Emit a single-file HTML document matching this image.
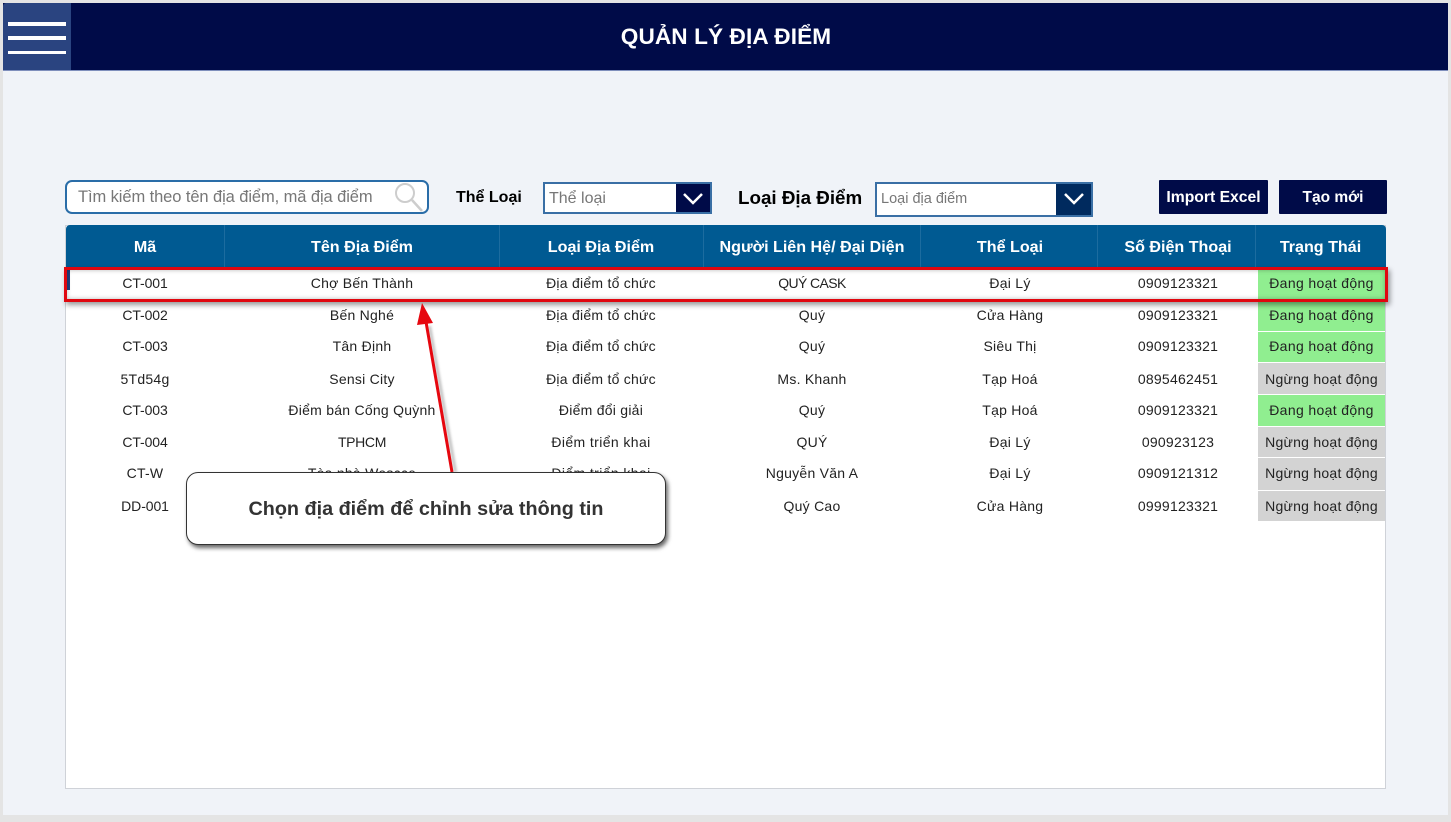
<!DOCTYPE html>
<html lang="vi">
<head>
<meta charset="utf-8">
<title>Quản lý địa điểm</title>
<style>
html,body{margin:0;padding:0;width:1451px;height:822px;overflow:hidden;background:#e4e4e4;font-family:"Liberation Sans","DejaVu Sans",sans-serif;color:#222}
*{box-sizing:border-box}
.a{position:absolute}
#app{left:3px;top:3px;width:1445px;height:812px;background:#f0f3f8}
#hdr{left:3px;top:3px;width:1445px;height:68px;background:#000b48;border-bottom:1px solid #7f8fbc}
#menu{left:3px;top:3px;width:68px;height:67px;background:#2a4480;border-radius:3px 0 0 0}
.bar{left:8px;width:57.5px;height:3.6px;background:#fff}
#title{left:3px;top:21px;width:1445px;text-align:center;color:#fff;font-weight:bold;font-size:22.6px;line-height:32px;padding-left:1px;letter-spacing:.1px}
#search{left:65px;top:180px;width:364px;height:34px;background:#fff;border:2px solid #2a6da8;border-radius:7px}
#stext{left:78px;top:186px;font-size:16.5px;line-height:22px;color:#777;letter-spacing:-.09px;white-space:nowrap}
.lbl{font-weight:bold;color:#000;white-space:nowrap}
.dd{background:#fff;border:2px solid #3a6fa5}
.ddt{color:#777;white-space:nowrap}
.btn{background:#000b48;color:#fff;font-weight:bold;text-align:center;line-height:36px;height:34px;border-radius:1px}
#tbl{left:65px;top:225px;width:1321px;height:564px;background:#fff;border:1px solid #cfd2d8}
#th{left:66px;top:225px;width:1320px;height:42px;background:#005a92;border-radius:4px 4px 0 0}
.sep{top:225px;width:1px;height:42px;background:#1c6c9f}
.h,.c{position:absolute;text-align:center;white-space:nowrap}
.h{top:237px;color:#fff;font-weight:bold;font-size:16.1px;line-height:20px}
.c{font-size:14px;line-height:18px;color:#222;letter-spacing:.25px}
.n{letter-spacing:-.1px}
.c1{left:66px;width:158px}.c2{left:224px;width:276px}.c3{left:500px;width:202px}.c4{left:702px;width:220px}.c5{left:922px;width:176px}.c6{left:1098px;width:160px}.c7{left:1258px;width:127px}
.g{position:absolute;left:1258px;width:127px;background:#90ee90}
.x{position:absolute;left:1258px;width:127px;background:#d3d3d3}
#hl{left:64px;top:267px;width:1324px;height:35px;border:3px solid #e0070f;box-shadow:2px 3px 5px rgba(0,0,0,.4),inset 0 0 5px rgba(0,0,0,.28)}
#call{left:186px;top:472px;width:480px;height:73px;background:#fff;border:1px solid #333;border-radius:12px;box-shadow:2px 3px 4px rgba(0,0,0,.6);text-align:center;font-weight:bold;font-size:19.8px;line-height:72px;color:#333}
</style>
</head>
<body>
<div class="a" id="app"></div>
<div class="a" id="hdr"></div>
<div class="a" id="menu"></div>
<div class="a bar" style="top:22.2px"></div>
<div class="a bar" style="top:36.3px"></div>
<div class="a bar" style="top:50.5px"></div>
<div class="a" id="title">QUẢN LÝ ĐỊA ĐIỂM</div>

<div class="a" id="search"></div>
<div class="a" id="stext">Tìm kiếm theo tên địa điểm, mã địa điểm</div>
<svg class="a" style="left:392px;top:180px" width="36" height="34" viewBox="0 0 36 34"><circle cx="13" cy="13" r="9" fill="none" stroke="#cdcdcd" stroke-width="2"/><path d="M20 20L30 31" stroke="#cdcdcd" stroke-width="2.5" fill="none"/></svg>
<div class="a lbl" style="left:456px;top:188px;font-size:16px;line-height:20px">Thể Loại</div>

<div class="a dd" style="left:543px;top:182px;width:169px;height:32px"></div>
<div class="a ddt" style="left:549px;top:189px;font-size:16px;line-height:20px">Thể loại</div>
<div class="a" style="left:676px;top:184px;width:34px;height:28px;background:#000b48"></div>
<svg class="a" style="left:675px;top:183px" width="36" height="30" viewBox="0 0 36 30"><path d="M9 11L18 20L27 11" fill="none" stroke="#fff" stroke-width="2.5"/></svg>

<div class="a lbl" style="left:738px;top:187px;font-size:18.8px;line-height:22px">Loại Địa Điểm</div>

<div class="a dd" style="left:875px;top:182px;width:218px;height:35px"></div>
<div class="a ddt" style="left:881px;top:190px;font-size:14.5px;line-height:18px">Loại địa điểm</div>
<div class="a" style="left:1056px;top:184px;width:35px;height:31px;background:#002a5e"></div>
<svg class="a" style="left:1056px;top:183px" width="36" height="32" viewBox="0 0 36 32"><path d="M9 11L18 20L27 11" fill="none" stroke="#fff" stroke-width="2.5"/></svg>

<div class="a btn" style="left:1159px;top:180px;width:109px;font-size:15.7px">Import Excel</div>
<div class="a btn" style="left:1279px;top:180px;width:108px;font-size:15.5px">Tạo mới</div>

<div class="a" id="tbl"></div>
<div class="a" id="th"></div>
<div class="a sep" style="left:224px"></div>
<div class="a sep" style="left:499px"></div>
<div class="a sep" style="left:703px"></div>
<div class="a sep" style="left:920px"></div>
<div class="a sep" style="left:1097px"></div>
<div class="a sep" style="left:1255px"></div>
<div class="h c1">Mã</div>
<div class="h c2">Tên Địa Điểm</div>
<div class="h c3">Loại Địa Điểm</div>
<div class="h c4">Người Liên Hệ/ Đại Diện</div>
<div class="h c5">Thể Loại</div>
<div class="h c6">Số Điện Thoại</div>
<div class="h c7" style="left:1257px">Trạng Thái</div>

<div class="g" style="top:268px;height:31px"></div>
<div class="g" style="top:300px;height:31px"></div>
<div class="g" style="top:332px;height:30px"></div>
<div class="x" style="top:363px;height:31px"></div>
<div class="g" style="top:395px;height:31px"></div>
<div class="x" style="top:427px;height:30px"></div>
<div class="x" style="top:458px;height:32px"></div>
<div class="x" style="top:491px;height:30px"></div>
<div class="a" style="left:67px;top:270px;width:3px;height:20px;background:#1f3f7f"></div>

<div class="c c1 n" style="top:274px">CT-001</div><div class="c c2" style="top:274px">Chợ Bến Thành</div><div class="c c3" style="top:274px">Địa điểm tổ chức</div><div class="c c4" style="top:274px;letter-spacing:-.6px">QUÝ CASK</div><div class="c c5" style="top:274px">Đại Lý</div><div class="c c6" style="top:274px">0909123321</div><div class="c c7" style="top:274px;letter-spacing:.35px">Đang hoạt động</div>
<div class="c c1 n" style="top:306px">CT-002</div><div class="c c2" style="top:306px">Bến Nghé</div><div class="c c3" style="top:306px">Địa điểm tổ chức</div><div class="c c4" style="top:306px">Quý</div><div class="c c5" style="top:306px">Cửa Hàng</div><div class="c c6" style="top:306px">0909123321</div><div class="c c7" style="top:306px;letter-spacing:.35px">Đang hoạt động</div>
<div class="c c1 n" style="top:337px">CT-003</div><div class="c c2" style="top:337px">Tân Định</div><div class="c c3" style="top:337px">Địa điểm tổ chức</div><div class="c c4" style="top:337px">Quý</div><div class="c c5" style="top:337px">Siêu Thị</div><div class="c c6" style="top:337px">0909123321</div><div class="c c7" style="top:337px;letter-spacing:.35px">Đang hoạt động</div>
<div class="c c1" style="top:370px">5Td54g</div><div class="c c2" style="top:370px">Sensi City</div><div class="c c3" style="top:370px">Địa điểm tổ chức</div><div class="c c4" style="top:370px">Ms. Khanh</div><div class="c c5" style="top:370px">Tạp Hoá</div><div class="c c6" style="top:370px">0895462451</div><div class="c c7" style="top:370px">Ngừng hoạt động</div>
<div class="c c1 n" style="top:401px">CT-003</div><div class="c c2" style="top:401px">Điểm bán Cống Quỳnh</div><div class="c c3" style="top:401px">Điểm đổi giải</div><div class="c c4" style="top:401px">Quý</div><div class="c c5" style="top:401px">Tạp Hoá</div><div class="c c6" style="top:401px">0909123321</div><div class="c c7" style="top:401px;letter-spacing:.35px">Đang hoạt động</div>
<div class="c c1 n" style="top:433px">CT-004</div><div class="c c2" style="top:433px;letter-spacing:-.35px">TPHCM</div><div class="c c3" style="top:433px;letter-spacing:.4px">Điểm triển khai</div><div class="c c4" style="top:433px">QUÝ</div><div class="c c5" style="top:433px">Đại Lý</div><div class="c c6" style="top:433px">090923123</div><div class="c c7" style="top:433px">Ngừng hoạt động</div>
<div class="c c1" style="top:464px">CT-W</div><div class="c c2" style="top:464px">Tòa nhà Wescce</div><div class="c c3" style="top:464px;letter-spacing:.4px">Điểm triển khai</div><div class="c c4" style="top:464px">Nguyễn Văn A</div><div class="c c5" style="top:464px">Đại Lý</div><div class="c c6" style="top:464px">0909121312</div><div class="c c7" style="top:464px">Ngừng hoạt động</div>
<div class="c c1 n" style="top:497px">DD-001</div><div class="c c4" style="top:497px">Quý Cao</div><div class="c c5" style="top:497px">Cửa Hàng</div><div class="c c6" style="top:497px">0999123321</div><div class="c c7" style="top:497px">Ngừng hoạt động</div>

<div class="a" id="hl"></div>
<svg class="a" style="left:400px;top:295px" width="80" height="185" viewBox="0 0 80 185">
<defs><filter id="b" x="-50%" y="-10%" width="200%" height="120%"><feGaussianBlur stdDeviation="1.2"/></filter></defs>
<path d="M28 30L54 176" stroke="rgba(0,0,0,.25)" stroke-width="3" fill="none" filter="url(#b)" transform="translate(1.5,1)"/>
<path d="M22 8L17 30L33 28Z" fill="#e6070f"/>
<path d="M25.5 24L52 177" stroke="#e6070f" stroke-width="3" fill="none"/>
</svg>
<div class="a" id="call">Chọn địa điểm để chỉnh sửa thông tin</div>
</body>
</html>
